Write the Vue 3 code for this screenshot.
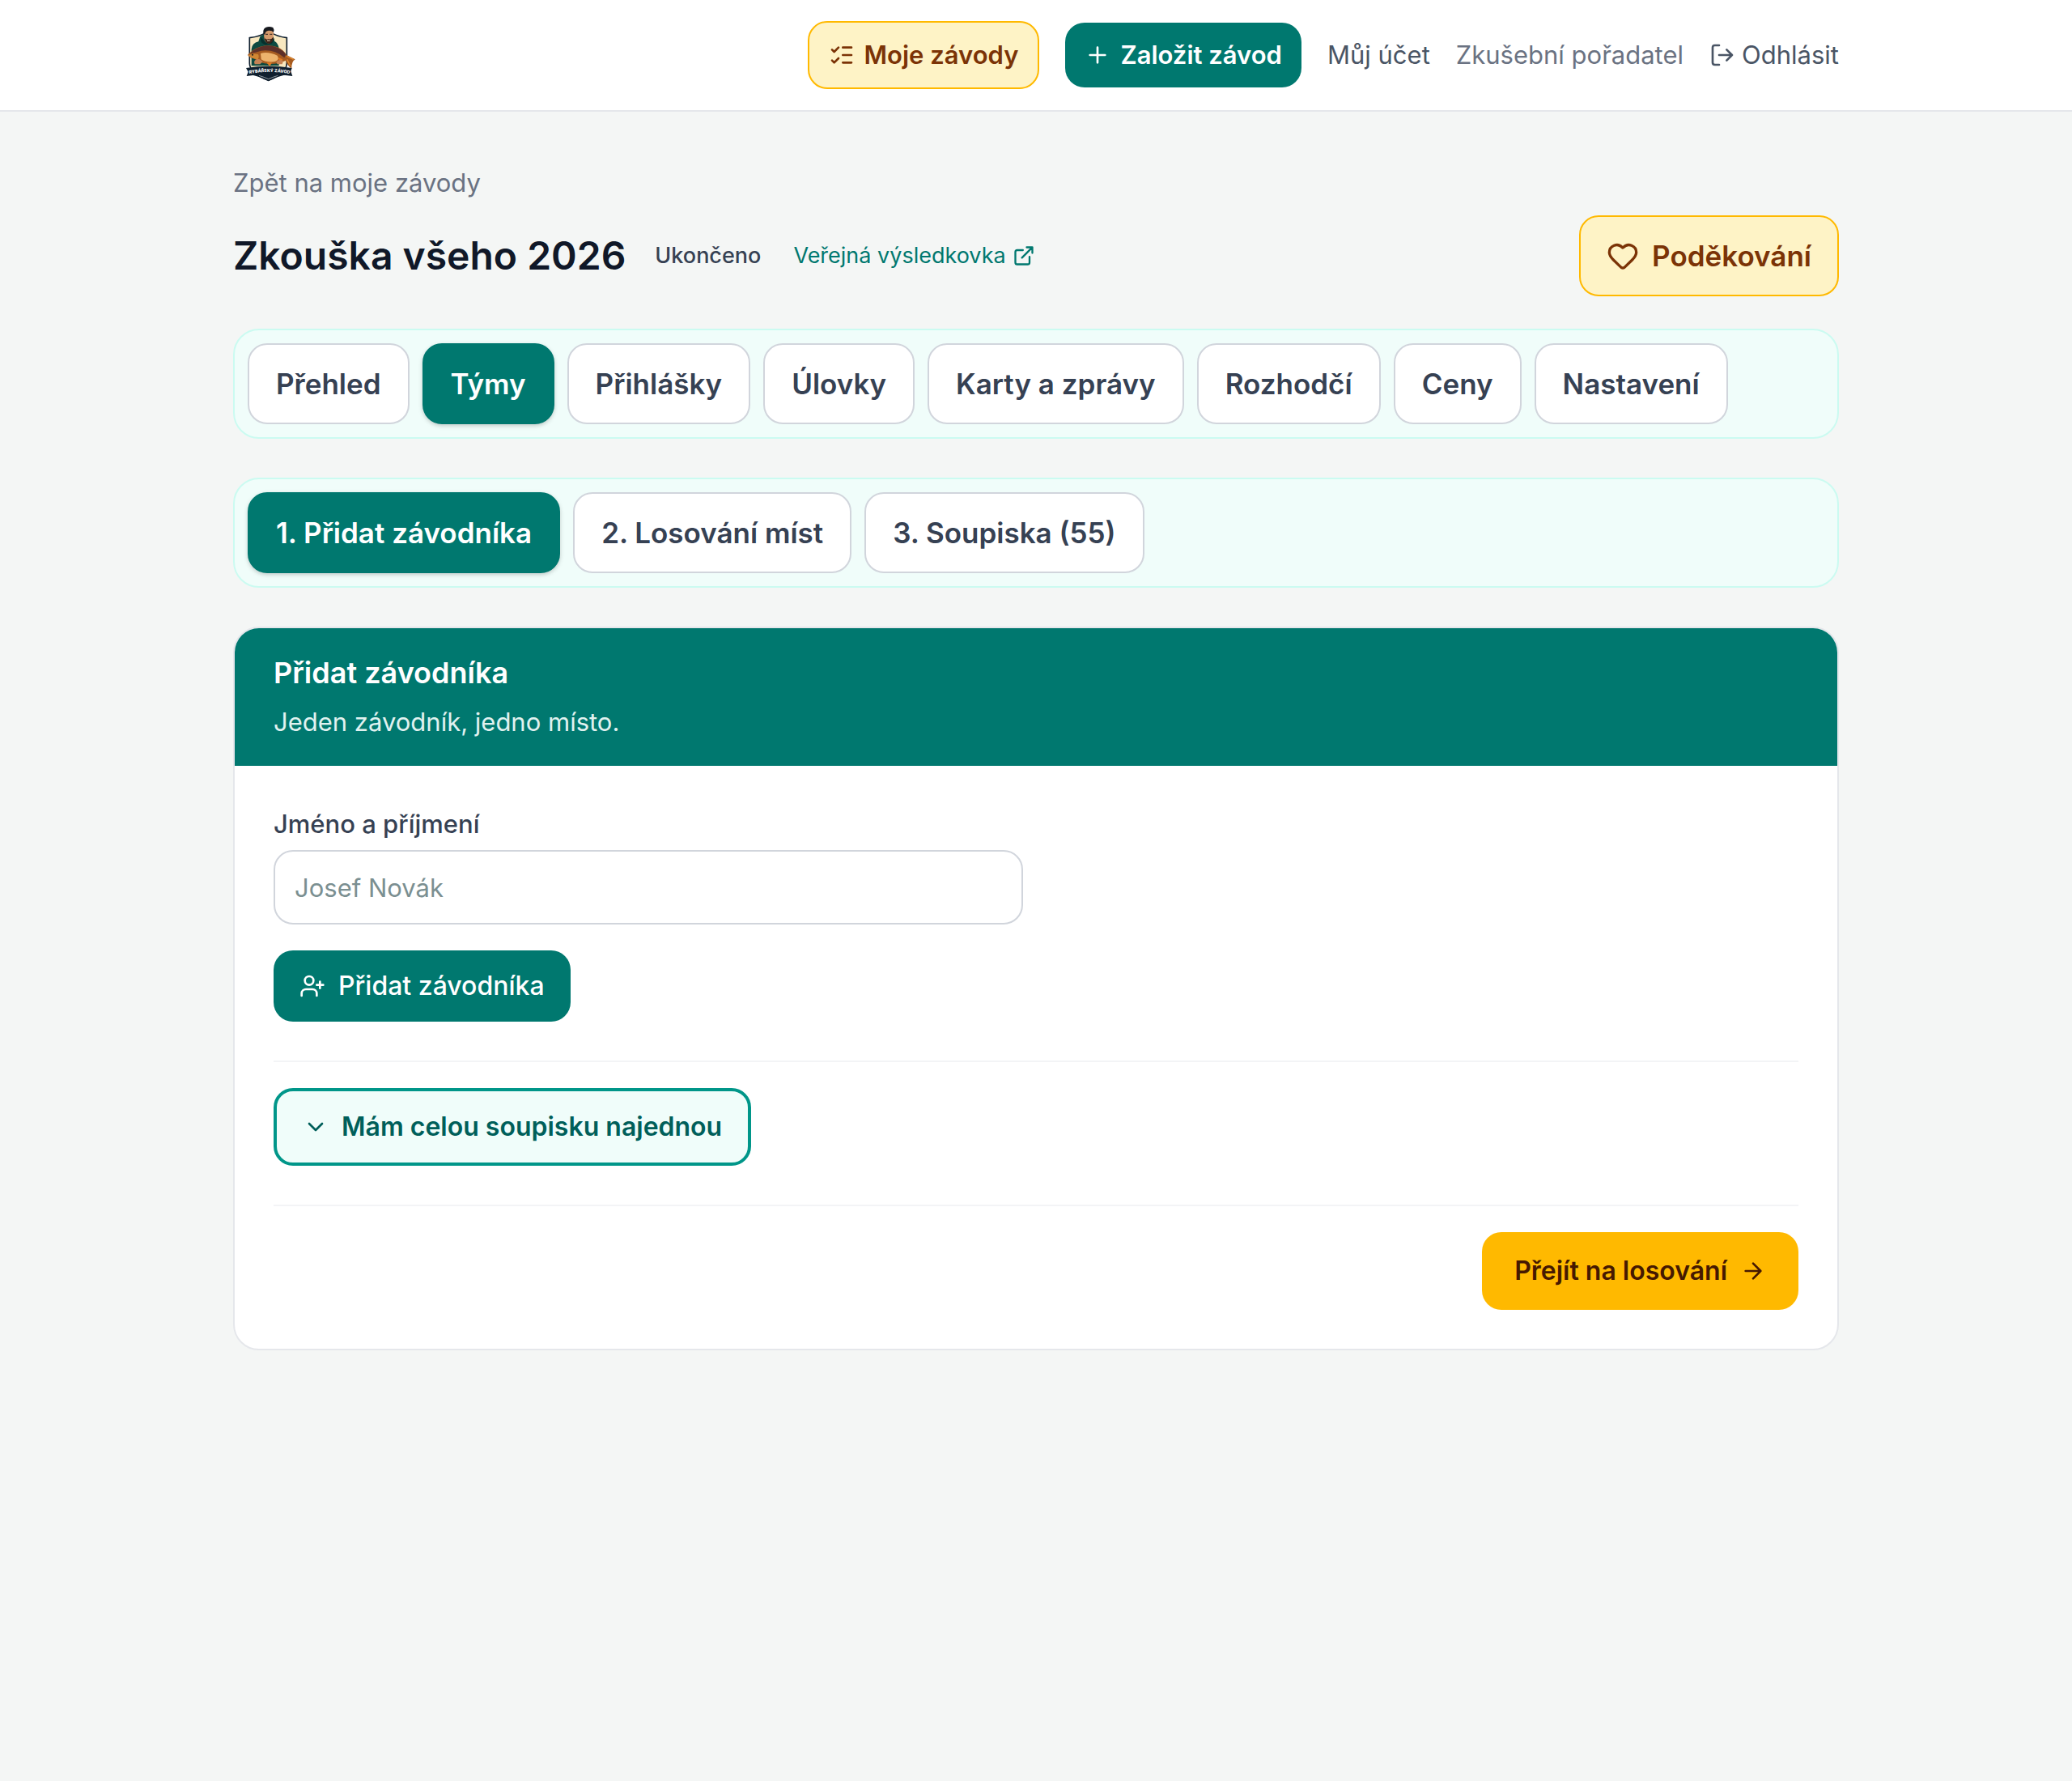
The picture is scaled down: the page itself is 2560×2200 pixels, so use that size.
<script setup>
import { ref } from 'vue'

const name = ref('')
const activeTab = ref('Týmy')
const activeStep = ref(0)

const tabs = ['Přehled', 'Týmy', 'Přihlášky', 'Úlovky', 'Karty a zprávy', 'Rozhodčí', 'Ceny', 'Nastavení']
const steps = ['1. Přidat závodníka', '2. Losování míst', '3. Soupiska (55)']
</script>

<template>
    <div class="page">
        <header class="header">
            <div class="header__inner">
                <a class="header__logo" href="#" aria-label="Rybářský závod">
                    <svg class="logo" viewBox="24 48 288 252">
                        <path d="M85 110Q125 106 155 86Q187 106 223 110V205Q223 242 155 268Q85 242 85 205Z" fill="#f8e8c0"
                            stroke="#10202f" stroke-width="5" />
                        <!-- angler -->
                        <path d="M92 214V152Q94 130 118 124L124 106Q134 94 142 100L170 104Q178 112 177 122Q192 130 194 150V214Z"
                            fill="#0d4a41" />
                        <path d="M128 108Q120 128 144 136L166 132Q178 122 172 112L160 130H146Z" fill="#072f2c" />
                        <path d="M138 88Q140 80 156 80Q172 80 174 90L173 112Q168 130 155 131Q142 128 139 112Z" fill="#d59a6c" />
                        <path d="M139 108Q145 119 155 115Q166 118 174 106Q173 130 156 132Q142 129 139 108Z" fill="#3a2218" />
                        <path d="M137 100Q132 76 146 71Q158 66 172 72Q178 80 174 90Q168 82 156 83Q144 84 142 96Z" fill="#17191f" />
                        <path d="M144 97h9M160 97h9" stroke="#28201c" stroke-width="3" />
                        <path d="M150 121h11" stroke="#f2d8bd" stroke-width="3" />
                        <!-- carp -->
                        <path d="M78 174Q96 152 124 143Q158 134 186 144Q212 154 222 174L254 190Q240 198 241 224Q226 214 219 194Q190 208 158 207Q120 204 104 188Q88 186 78 174Z"
                            fill="#a65b20" />
                        <path d="M86 168Q112 142 150 139Q196 140 220 172L214 184Q178 152 128 158Q104 166 86 168Z" fill="#5d3029" />
                        <path d="M126 168Q154 160 188 176Q198 190 180 198Q148 204 128 190Z" fill="#edb36d" />
                        <path d="M80 175Q98 166 116 171Q122 178 116 190Q94 188 80 175Z" fill="#d08734" />
                        <path d="M190 182l18 8-8 14ZM148 202l20 0-8 14Z" fill="#e07a22" />
                        <path d="M222 178l26 12M224 190l12 24" stroke="#e08a2e" stroke-width="4" />
                        <circle cx="96" cy="173" r="3" fill="#17191f" />
                        <path d="M102 200Q106 186 122 190L134 198L124 208H104ZM184 200Q194 186 210 196L206 208H188Z" fill="#c58355" />
                        <!-- ribbon -->
                        <path d="M84 222H226V246Q190 252 155 271Q120 252 84 246Z" fill="#10202f" />
                        <path d="M120 250Q140 256 155 263Q170 256 190 250" fill="none" stroke="#c9ced2" stroke-width="2" />
                        <path d="M72 222Q155 208 242 222L238 234L244 252Q155 238 74 252L80 236Z" fill="#10202f" />
                        <path id="ribbon" d="M78 244Q157 230 240 244" fill="none" />
                        <text class="logo__text">
                            <textPath href="#ribbon" startOffset="50%">RYBÁŘSKÝ ZÁVOD</textPath>
                        </text>
                    </svg>
                </a>
                <nav class="menu">
                    <a class="menu__btn menu__btn--amber" href="#">
                        <svg class="icon" viewBox="0 0 24 24">
                            <path d="M13 5h8M13 12h8M13 19h8M3 17l2 2 4-4M3 7l2 2 4-4" />
                        </svg>
                        Moje závody
                    </a>
                    <a class="menu__btn menu__btn--teal" href="#">
                        <svg class="icon" viewBox="0 0 24 24">
                            <path d="M5 12h14M12 5v14" />
                        </svg>
                        Založit závod
                    </a>
                    <a class="menu__link" href="#">Můj účet</a>
                    <span class="menu__user">Zkušební pořadatel</span>
                    <button class="menu__logout" type="button">
                        <svg class="icon" viewBox="0 0 24 24">
                            <path d="M16 17l5-5-5-5M21 12H9M9 21H5a2 2 0 0 1-2-2V5a2 2 0 0 1 2-2h4" />
                        </svg>
                        Odhlásit
                    </button>
                </nav>
            </div>
        </header>

        <main class="main">
            <a class="back" href="#">Zpět na moje závody</a>

            <div class="title">
                <h1 class="title__name">Zkouška všeho 2026</h1>
                <span class="title__status">Ukončeno</span>
                <a class="title__public" href="#">
                    Veřejná výsledkovka
                    <svg class="icon icon--small" viewBox="0 0 24 24">
                        <path d="M15 3h6v6M10 14L21 3M18 13v6a2 2 0 0 1-2 2H5a2 2 0 0 1-2-2V8a2 2 0 0 1 2-2h6" />
                    </svg>
                </a>
                <a class="title__thanks" href="#">
                    <svg class="icon icon--large" viewBox="0 0 24 24">
                        <path
                            d="M2 9.5a5.5 5.5 0 0 1 9.591-3.676.56.56 0 0 0 .818 0A5.49 5.49 0 0 1 22 9.5c0 2.29-1.5 4-3 5.5l-5.492 5.313a2 2 0 0 1-3 .019L5 15c-1.5-1.5-3-3.2-3-5.5" />
                    </svg>
                    Poděkování
                </a>
            </div>

            <nav class="tabs">
                <button v-for="tab in tabs" :key="tab" class="tabs__item" :class="{ 'tabs__item--active': tab === activeTab }"
                    type="button" @click="activeTab = tab">{{ tab }}</button>
            </nav>

            <nav class="tabs">
                <button v-for="(step, i) in steps" :key="step" class="tabs__item"
                    :class="{ 'tabs__item--active': i === activeStep }" type="button" @click="activeStep = i">{{ step }}</button>
            </nav>

            <section class="card">
                <div class="card__head">
                    <h2 class="card__title">Přidat závodníka</h2>
                    <p class="card__sub">Jeden závodník, jedno místo.</p>
                </div>
                <div class="card__body">
                    <form @submit.prevent>
                        <div class="fields">
                            <div class="field">
                                <label class="field__label" for="name">Jméno a příjmení</label>
                                <input id="name" v-model="name" class="field__input" type="text" placeholder="Josef Novák">
                            </div>
                        </div>
                        <button class="btn btn--add" type="submit">
                            <svg class="icon" viewBox="0 0 24 24">
                                <path d="M2 21v-2a4 4 0 0 1 4-4h6a4 4 0 0 1 4 4v2M19 8v6M22 11h-6" />
                                <circle cx="9" cy="7" r="4" />
                            </svg>
                            Přidat závodníka
                        </button>
                    </form>
                    <div class="card__row">
                        <button class="btn btn--outline" type="button">
                            <svg class="icon" viewBox="0 0 24 24">
                                <path d="M6 9l6 6 6-6" />
                            </svg>
                            Mám celou soupisku najednou
                        </button>
                    </div>
                    <div class="card__row card__row--end">
                        <button class="btn btn--next" type="button">
                            Přejít na losování
                            <svg class="icon" viewBox="0 0 24 24">
                                <path d="M5 12h14M12 5l7 7-7 7" />
                            </svg>
                        </button>
                    </div>
                </div>
            </section>
        </main>
    </div>
</template>

<style>
body {
    background: #f4f6f5;
}
</style>

<style scoped>
* {
    box-sizing: border-box;
}

.page {
    min-height: 100vh;
    font-family: Inter, "Liberation Sans", sans-serif;
    font-size: 31px;
    line-height: 48px;
    color: #101828;
}

a {
    color: inherit;
    text-decoration: none;
}

button,
input {
    font: inherit;
    color: inherit;
}

button {
    cursor: pointer;
}

.icon {
    flex: none;
    width: 32px;
    height: 32px;
    fill: none;
    stroke: currentColor;
    stroke-width: 2;
    stroke-linecap: round;
    stroke-linejoin: round;
}

.icon--small {
    width: 28px;
    height: 28px;
}

.icon--large {
    width: 40px;
    height: 40px;
}

.header {
    background: #fff;
    border-bottom: 2px solid #e5e7eb;
}

.header__inner {
    display: flex;
    align-items: center;
    justify-content: space-between;
    max-width: 2048px;
    margin: 0 auto;
    padding: 26px 32px;
}

.header__logo {
    display: flex;
}

.logo {
    width: 96px;
    height: 84px;
}

.logo__text {
    fill: #fff;
    font-size: 16px;
    font-weight: 800;
    text-anchor: middle;
}

.menu {
    display: flex;
    align-items: center;
    gap: 32px;
}

.menu__btn {
    display: flex;
    align-items: center;
    gap: 12px;
    min-height: 80px;
    padding: 16px 24px;
    border-radius: 24px;
    font-weight: 600;
}

.menu__btn--amber {
    min-height: 84px;
    background: #fef3c6;
    border: 2px solid #ffb900;
    color: #7b3306;
}

.menu__btn--teal {
    background: #00786f;
    color: #fff;
}

.menu__link {
    color: #4a5565;
}

.menu__user {
    color: #6a7282;
}

.menu__logout {
    display: flex;
    align-items: center;
    gap: 8px;
    padding: 0;
    border: 0;
    background: none;
    color: #4a5565;
}

.main {
    max-width: 2048px;
    margin: 0 auto;
    padding: 64px 32px;
}

.back {
    display: block;
    color: #6a7282;
}

.title {
    display: flex;
    align-items: center;
    margin: 16px 0 40px;
}

.title__name {
    margin: 0;
    font-size: 48px;
    line-height: 64px;
    font-weight: 600;
}

.title__status {
    margin: 0 40px 0 36px;
    font-size: 27px;
    font-weight: 500;
    color: #364153;
}

.title__public {
    display: flex;
    align-items: center;
    gap: 8px;
    font-size: 27px;
    color: #00786f;
}

.title__thanks {
    display: flex;
    align-items: center;
    gap: 16px;
    min-height: 100px;
    margin-left: auto;
    padding: 0 32px;
    border: 2px solid #ffb900;
    border-radius: 24px;
    background: #fef3c6;
    color: #7b3306;
    font-size: 35px;
    font-weight: 600;
}

.tabs {
    display: flex;
    flex-wrap: wrap;
    gap: 16px;
    margin-bottom: 48px;
    padding: 16px;
    border: 2px solid #cbfbf1;
    border-radius: 32px;
    background: #f0fdfa;
}

.tabs__item {
    min-height: 100px;
    padding: 0 33px;
    border: 2px solid #d1d5dc;
    border-radius: 24px;
    background: #fff;
    color: #364153;
    font-size: 35px;
    font-weight: 600;
}

.tabs__item--active {
    border-color: #00786f;
    background: #00786f;
    box-shadow: 0 2px 6px rgba(0, 0, 0, .1), 0 2px 4px rgba(0, 0, 0, .1);
    color: #fff;
}

.card {
    overflow: hidden;
    border: 2px solid #e5e7eb;
    border-radius: 32px;
    background: #fff;
}

.card__head {
    padding: 26px 48px 30px;
    background: #00786f;
    color: #fff;
}

.card__title {
    margin: 0 0 8px;
    font-size: 36px;
    line-height: 58px;
    font-weight: 600;
}

.card__sub {
    margin: 0;
    color: #e0f2f0;
}

.card__body {
    padding: 48px;
}

.fields {
    display: grid;
    grid-template-columns: 1fr 1fr;
    gap: 32px;
    margin-bottom: 32px;
}

.field {
    display: flex;
    flex-direction: column;
    gap: 8px;
}

.field__label {
    font-weight: 500;
    color: #364153;
}

.field__input {
    width: 100%;
    height: 92px;
    padding: 0 24px;
    border: 2px solid #d1d5dc;
    border-radius: 24px;
    background: #fff;
}

.field__input::placeholder {
    color: #7b8f91;
    opacity: 1;
}

.card__row {
    display: flex;
    margin-top: 48px;
    padding-top: 32px;
    border-top: 2px solid #f3f4f6;
}

.card__row--end {
    justify-content: flex-end;
}

.btn {
    display: flex;
    align-items: center;
    gap: 16px;
    min-height: 96px;
    padding: 0 40px;
    border: 0;
    border-radius: 24px;
    font-size: 32px;
    font-weight: 600;
}

.btn--add {
    min-height: 88px;
    padding: 0 32px;
    background: #00786f;
    color: #fff;
    font-weight: 500;
}

.btn--outline {
    padding: 0 32px;
    border: 4px solid #009689;
    background: #f0fdfa;
    color: #005f5a;
}

.btn--next {
    background: #ffb900;
    color: #461901;
}
</style>
